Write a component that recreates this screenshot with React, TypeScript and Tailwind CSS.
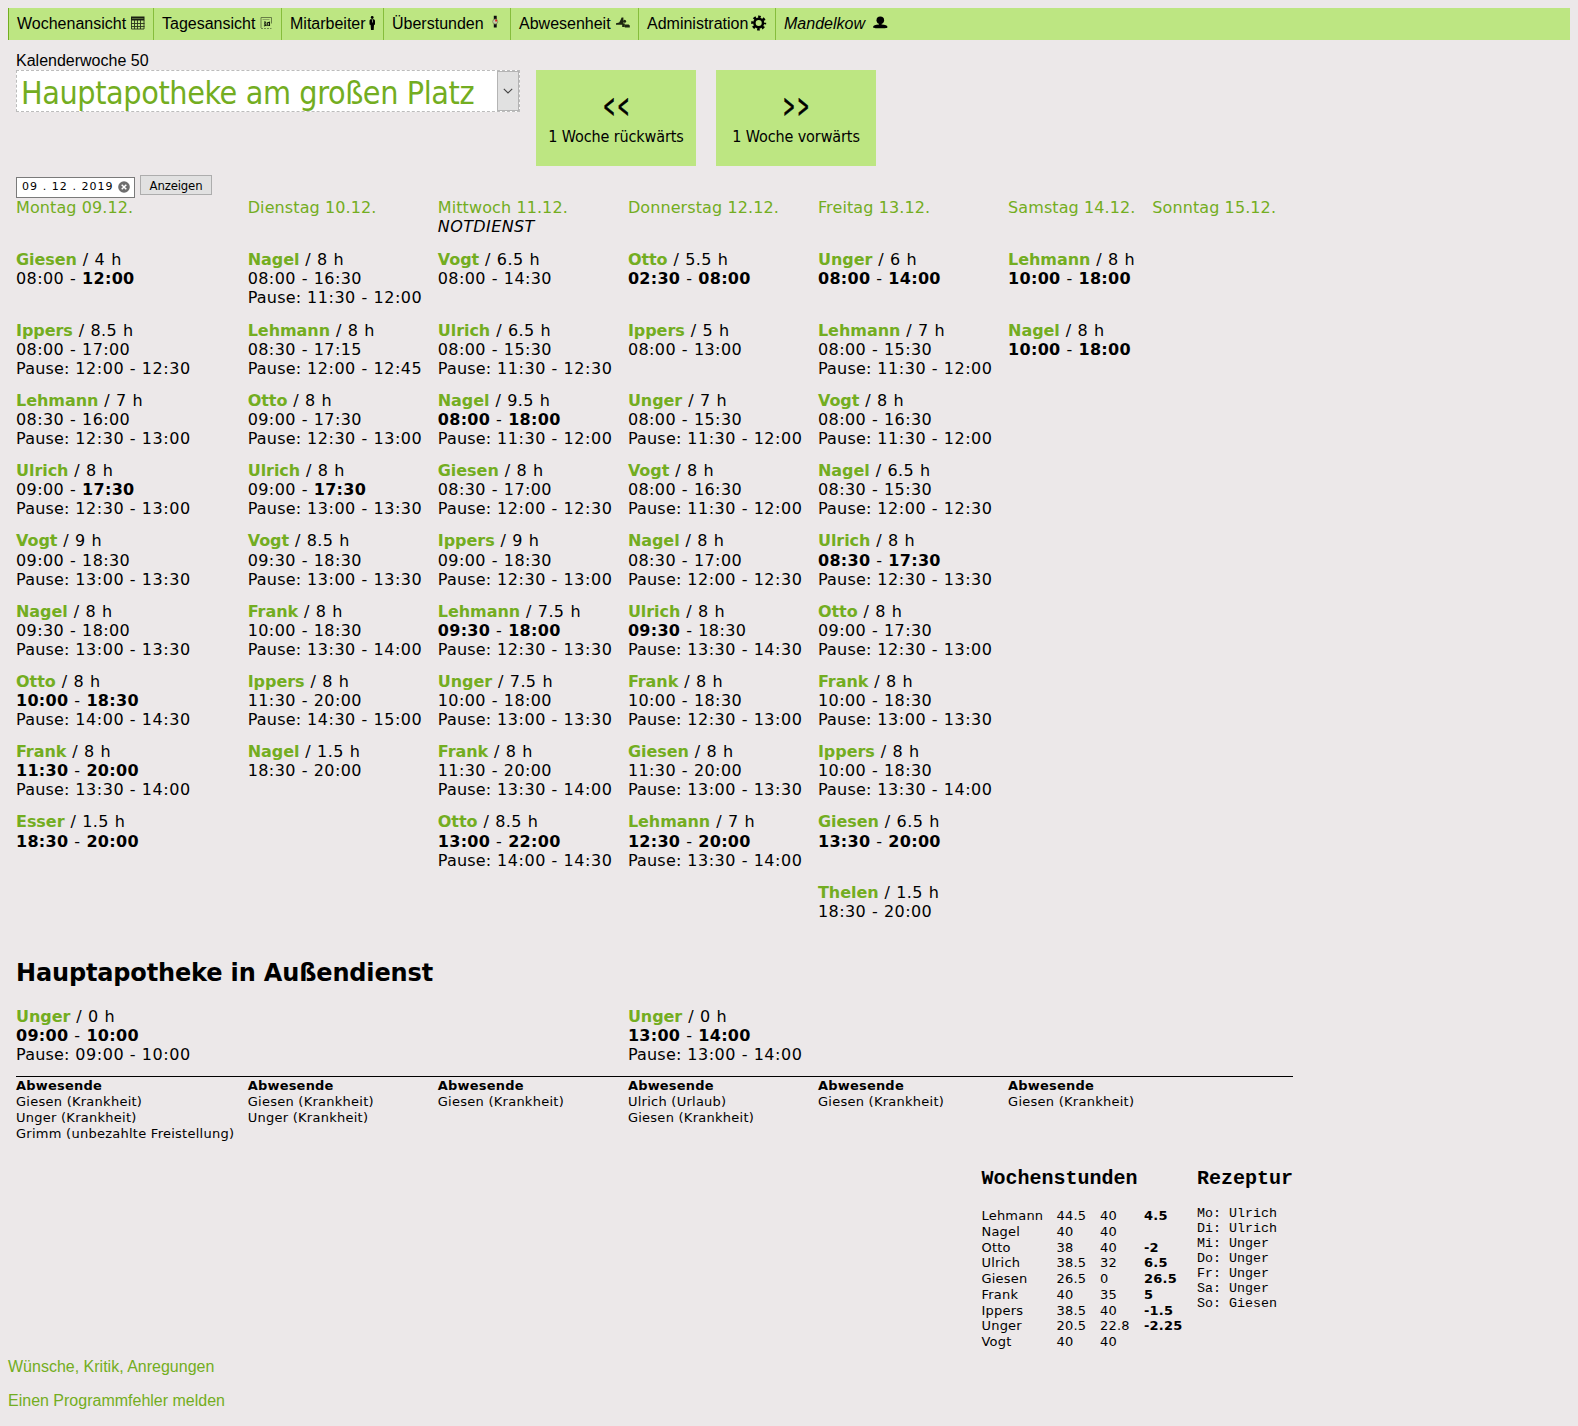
import React from "react";

type Shift = { name: string; hours: string; from: string; to: string; pause?: string };

/* Format: name|hours|from|to|pause; an asterisk marks an emphasised time. */
const parse = (s: string): Shift => {
  const [name, hours, from, to, pause] = s.split("|");
  return { name, hours, from, to, pause };
};

const days: { label: string; note?: string; shifts: string[]; outside?: string; absent: string[] }[] = [
  {
    label: "Montag 09.12.",
    shifts: [
      "Giesen|4|08:00|*12:00",
      "Ippers|8.5|08:00|17:00|12:00 - 12:30",
      "Lehmann|7|08:30|16:00|12:30 - 13:00",
      "Ulrich|8|09:00|*17:30|12:30 - 13:00",
      "Vogt|9|09:00|18:30|13:00 - 13:30",
      "Nagel|8|09:30|18:00|13:00 - 13:30",
      "Otto|8|*10:00|*18:30|14:00 - 14:30",
      "Frank|8|*11:30|*20:00|13:30 - 14:00",
      "Esser|1.5|*18:30|*20:00",
    ],
    outside: "Unger|0|*09:00|*10:00|09:00 - 10:00",
    absent: ["Giesen (Krankheit)", "Unger (Krankheit)", "Grimm (unbezahlte Freistellung)"],
  },
  {
    label: "Dienstag 10.12.",
    shifts: [
      "Nagel|8|08:00|16:30|11:30 - 12:00",
      "Lehmann|8|08:30|17:15|12:00 - 12:45",
      "Otto|8|09:00|17:30|12:30 - 13:00",
      "Ulrich|8|09:00|*17:30|13:00 - 13:30",
      "Vogt|8.5|09:30|18:30|13:00 - 13:30",
      "Frank|8|10:00|18:30|13:30 - 14:00",
      "Ippers|8|11:30|20:00|14:30 - 15:00",
      "Nagel|1.5|18:30|20:00",
    ],
    absent: ["Giesen (Krankheit)", "Unger (Krankheit)"],
  },
  {
    label: "Mittwoch 11.12.",
    note: "NOTDIENST",
    shifts: [
      "Vogt|6.5|08:00|14:30",
      "Ulrich|6.5|08:00|15:30|11:30 - 12:30",
      "Nagel|9.5|*08:00|*18:00|11:30 - 12:00",
      "Giesen|8|08:30|17:00|12:00 - 12:30",
      "Ippers|9|09:00|18:30|12:30 - 13:00",
      "Lehmann|7.5|*09:30|*18:00|12:30 - 13:30",
      "Unger|7.5|10:00|18:00|13:00 - 13:30",
      "Frank|8|11:30|20:00|13:30 - 14:00",
      "Otto|8.5|*13:00|*22:00|14:00 - 14:30",
    ],
    absent: ["Giesen (Krankheit)"],
  },
  {
    label: "Donnerstag 12.12.",
    shifts: [
      "Otto|5.5|*02:30|*08:00",
      "Ippers|5|08:00|13:00",
      "Unger|7|08:00|15:30|11:30 - 12:00",
      "Vogt|8|08:00|16:30|11:30 - 12:00",
      "Nagel|8|08:30|17:00|12:00 - 12:30",
      "Ulrich|8|*09:30|18:30|13:30 - 14:30",
      "Frank|8|10:00|18:30|12:30 - 13:00",
      "Giesen|8|11:30|20:00|13:00 - 13:30",
      "Lehmann|7|*12:30|*20:00|13:30 - 14:00",
    ],
    outside: "Unger|0|*13:00|*14:00|13:00 - 14:00",
    absent: ["Ulrich (Urlaub)", "Giesen (Krankheit)"],
  },
  {
    label: "Freitag 13.12.",
    shifts: [
      "Unger|6|*08:00|*14:00",
      "Lehmann|7|08:00|15:30|11:30 - 12:00",
      "Vogt|8|08:00|16:30|11:30 - 12:00",
      "Nagel|6.5|08:30|15:30|12:00 - 12:30",
      "Ulrich|8|*08:30|*17:30|12:30 - 13:30",
      "Otto|8|09:00|17:30|12:30 - 13:00",
      "Frank|8|10:00|18:30|13:00 - 13:30",
      "Ippers|8|10:00|18:30|13:30 - 14:00",
      "Giesen|6.5|*13:30|*20:00",
      "Thelen|1.5|18:30|20:00",
    ],
    absent: ["Giesen (Krankheit)"],
  },
  {
    label: "Samstag 14.12.",
    shifts: ["Lehmann|8|*10:00|*18:00", "Nagel|8|*10:00|*18:00"],
    absent: ["Giesen (Krankheit)"],
  },
  { label: "Sonntag 15.12.", shifts: [], absent: [] },
];

const hours = [
  ["Lehmann", "44.5", "40", "4.5"],
  ["Nagel", "40", "40", ""],
  ["Otto", "38", "40", "-2"],
  ["Ulrich", "38.5", "32", "6.5"],
  ["Giesen", "26.5", "0", "26.5"],
  ["Frank", "40", "35", "5"],
  ["Ippers", "38.5", "40", "-1.5"],
  ["Unger", "20.5", "22.8", "-2.25"],
  ["Vogt", "40", "40", ""],
];

const lab = [
  "Mo: Ulrich",
  "Di: Ulrich",
  "Mi: Unger",
  "Do: Unger",
  "Fr: Unger",
  "Sa: Unger",
  "So: Giesen",
];

const COLS = "grid grid-cols-[231.7px_190.1px_190.1px_190.1px_190.1px_144.2px_140.7px]";

function Time({ value }: { value: string }) {
  return value[0] === "*" ? (
    <b className="tracking-[0.3px]">{value.slice(1)}</b>
  ) : (
    <>{value}</>
  );
}

function ShiftCell({ data }: { data?: string }) {
  if (!data) return <div />;
  const s = parse(data);
  return (
    <div className="whitespace-nowrap">
      <div className="[word-spacing:0.45px]">
        <b className="text-[#73ad21] tracking-[-0.05px]">{s.name}</b> / {s.hours} h
      </div>
      <div className="[word-spacing:0.4px]">
        <Time value={s.from} /> - <Time value={s.to} />
      </div>
      {s.pause && (
        <div>
          <span className="tracking-[0.2px]">Pause:</span>
          <span className="tracking-[0.55px]"> {s.pause}</span>
        </div>
      )}
    </div>
  );
}

function WeekIcon() {
  return (
    <svg className="mb-[2px] ml-[5px]" width="14" height="14" viewBox="0 0 14 14">
      <rect x="0" y="0.5" width="13.5" height="4" fill="#1a1f12" />
      <path d="M1 2.500h11.500" stroke="#7d9a55" strokeWidth="0.6" />
      <path d="M0.500 4v9h12.500V4M0 7.500h13.500M0 10.500h13.500M3.500 4v9M6.500 4v9M9.500 4v9" fill="none" stroke="#2a331c" strokeWidth="0.9" />
    </svg>
  );
}

function DayIcon() {
  return (
    <svg className="mb-[2px] ml-[5px]" width="13" height="14" viewBox="0 0 13 14">
      <path d="M1 12V1.500h10.500v6" fill="none" stroke="#5d7340" strokeWidth="0.9" />
      <path d="M1 12.500h10.500" stroke="#5d7340" strokeWidth="0.8" strokeDasharray="2 1" />
      <path d="M2.500 3.500h7" stroke="#7e9a58" strokeWidth="0.8" />
      <path d="M4 6h1.800M5.600 6.500L4.600 8l1.200 1.200L4 10M9.500 10V8.500M7.200 9.200h2.300V6.200L7.200 7z" fill="none" stroke="#11160a" strokeWidth="1.1" />
    </svg>
  );
}

function PersonIcon() {
  return (
    <svg className="mb-[3px] ml-[3px]" width="7" height="14" viewBox="0 0 7 14">
      <circle cx="3.2" cy="1.5" r="1.4" />
      <path d="M1.4 3.200h3.600L6 4.400v4L5 9l-.3 5H2L1.600 9 .5 8.400v-4z" />
      <path d="M3.200 3.500h.8v3h-.8z" fill="#a5b98a" />
    </svg>
  );
}

function OvertimeIcon() {
  return (
    <svg className="mb-[4px] ml-[8px]" width="7" height="14" viewBox="0 0 7 14">
      <path d="M1.800 0.800h2.900V4.500H1.800zM1.800 8.800h2.900v3.700H1.800z" fill="#0c0c0c" />
      <circle cx="3.200" cy="6.600" r="2.500" fill="#c5cfae" stroke="#76834f" strokeWidth="0.8" />
      <path d="M3.200 4.600h1.800v2H3.200z" fill="#e21b1b" />
    </svg>
  );
}

function AbsenceIcon() {
  return (
    <svg className="mb-[2px] ml-[5px]" width="14" height="12" viewBox="0 0 14 12">
      <path d="M0 6.300l3.200-.9L4.800 2.500l.8-2h1.800v6h1.400V10H6.200V7.800H0z" fill="#1d2610" />
      <circle cx="8.600" cy="4.200" r="1.500" fill="#1d2610" />
      <path d="M8.800 7.600h3.800l1.200 1v1.900H8.800z" fill="#1d2610" />
    </svg>
  );
}

function GearIcon() {
  return (
    <svg className="mb-[3px] ml-[3px]" width="16" height="16" viewBox="0 0 16 16">
      <circle cx="7.700" cy="8" r="4.300" fill="none" stroke="#000" strokeWidth="2.500" />
      <circle cx="7.700" cy="8" r="6.200" fill="none" stroke="#000" strokeWidth="2.600" strokeDasharray="2.600 2.269" strokeDashoffset="1.300" />
    </svg>
  );
}

function UserIcon() {
  return (
    <svg className="mb-[4px] ml-[8px]" width="15" height="13" viewBox="0 0 15 13">
      <ellipse cx="7.300" cy="4.200" rx="3.800" ry="3.700" />
      <path d="M6 7h2.600v1.500c3.700.2 5.900 1.100 5.900 2.400 0 1-1.700 1.400-7.200 1.400S.1 11.900.1 10.900c0-1.300 2.200-2.200 5.900-2.400z" />
    </svg>
  );
}

function NavItem({ w, first, children }: { w: string; first?: boolean; children: React.ReactNode }) {
  return (
    <div className={`${w} flex h-8 items-center border-l ${first ? "border-[#73ad21]" : "border-[#86bd3c]"} pl-2 whitespace-nowrap`}>
      {children}
    </div>
  );
}

function WeekButton({ arrows, label, className }: { arrows: string; label: string; className: string }) {
  return (
    <div className={`${className} flex h-24 w-40 flex-col items-center bg-[#bde682] pt-[18px] font-['DejaVu_Sans_Condensed','DejaVu_Sans',sans-serif] [font-stretch:condensed]`}>
      <div className="scale-x-50 pl-[4px] text-[32px] leading-[36px] tracking-[4px] [-webkit-text-stroke:0.7px_black]">{arrows}</div>
      <div className="mt-[3px] text-[16px] leading-[20px] tracking-[-0.1px]">{label}</div>
    </div>
  );
}

export default function App() {
  return (
    <div className="h-[1426px] w-[1578px] overflow-hidden bg-[#ece8e9] pt-2 font-['Liberation_Sans',Arial,sans-serif] text-[16px] text-black">
      <nav className="mx-2 flex h-8 bg-[#bde682]">
        <NavItem w="w-[145px]" first>Wochenansicht<WeekIcon /></NavItem>
        <NavItem w="w-[128px]">Tagesansicht<DayIcon /></NavItem>
        <NavItem w="w-[102px]">Mitarbeiter<PersonIcon /></NavItem>
        <NavItem w="w-[127px]">Überstunden<OvertimeIcon /></NavItem>
        <NavItem w="w-[128px]">Abwesenheit<AbsenceIcon /></NavItem>
        <NavItem w="w-[137px]">Administration<GearIcon /></NavItem>
        <NavItem w="w-[120px]"><i>Mandelkow</i><UserIcon /></NavItem>
      </nav>

      <main className="px-4">
        <div className="mt-[11px] h-[19px] leading-[19px]">Kalenderwoche 50</div>
        <div className="flex items-start">
          <div className="flex h-[42px] w-[504px] items-stretch justify-between border border-dashed border-[#bcbcbc] bg-white">
            <span className="pt-px pl-[4px] font-['DejaVu_Sans_Condensed','DejaVu_Sans',sans-serif] [font-stretch:condensed] text-[32px] leading-[43px] tracking-[-0.4px] whitespace-nowrap text-[#73ad21]">
              Hauptapotheke am großen Platz
            </span>
            <span className="flex w-[22px] items-center justify-center border border-[#b4b4b4] bg-[#e1e1e1]">
              <svg width="10" height="6" viewBox="0 0 10 6"><path d="M0.800 0.800L5 5l4.200-4.200" fill="none" stroke="#444" strokeWidth="1.100" /></svg>
            </span>
          </div>
          <WeekButton className="ml-4" arrows="<<" label="1 Woche rückwärts" />
          <WeekButton className="ml-5" arrows=">>" label="1 Woche vorwärts" />
        </div>

        <div className="mt-[9px] flex h-[23px] items-start">
          <div className="mt-[2px] flex h-[21px] w-[119px] items-center border border-[#7a7a7a] bg-white pl-[5px] font-['DejaVu_Sans',sans-serif] text-[11px] whitespace-nowrap">
            <span className="w-[96px] tracking-[1.05px]">09 . 12 . 2019</span>
            <svg className="mb-px" width="12" height="12" viewBox="0 0 12 12"><circle cx="6" cy="6" r="5.800" fill="#6d6d6d" /><path d="M3.700 3.700l4.600 4.600M8.300 3.700L3.700 8.300" stroke="#fff" strokeWidth="1.500" /></svg>
          </div>
          <button className="ml-[5px] h-[20px] w-[72px] border border-[#adadad] bg-[#e1e1e1] pt-px font-['DejaVu_Sans_Condensed','DejaVu_Sans',sans-serif] [font-stretch:condensed] text-[13px] leading-[18px] tracking-[-0.15px]">Anzeigen</button>
        </div>

        <section className="w-[1277px] font-['DejaVu_Sans',Verdana,sans-serif] text-[16px] leading-[19.2px] tracking-[0.4px]">
          <div className={`${COLS} h-[51.7px]`}>
            {days.map((d) => (
              <div key={d.label} className="whitespace-nowrap">
                <div className="tracking-[0.1px] text-[#73ad21]">{d.label}</div>
                {d.note && <i>{d.note}</i>}
              </div>
            ))}
          </div>
          {Array.from({ length: 10 }, (_, r) => (
            <div key={r} className={`${COLS} ${r === 0 ? "h-[70.9px]" : "h-[70.25px]"}`}>
              {days.map((d) => <ShiftCell key={d.label} data={d.shifts[r]} />)}
            </div>
          ))}
          <h2 className="mt-[6.4px] h-[47.4px] text-[24px] leading-[29px] font-bold tracking-[-0.15px]">Hauptapotheke in Außendienst</h2>
          <div className={`${COLS} h-[69.6px]`}>
            {days.map((d) => <ShiftCell key={d.label} data={d.outside} />)}
          </div>
          <div className={`${COLS} h-[83px] border-t border-black pt-px text-[13px] leading-[16px] tracking-[0.260px]`}>
            {days.map((d) => (
              <div key={d.label} className="whitespace-nowrap">
                {d.absent.length > 0 && <b className="tracking-[0.2px]">Abwesende</b>}
                {d.absent.map((a) => <div key={a}>{a}</div>)}
              </div>
            ))}
          </div>
          <div className="flex h-[196px] justify-end">
            <div className="w-[215.5px]">
              <h3 className="h-[49px] font-['Liberation_Mono',monospace] text-[20px] leading-[40px] font-bold tracking-normal">Wochenstunden</h3>
              <div className="text-[13px] leading-[15.750px] tracking-[0.2px]">
                {hours.map(([n, a, b, c]) => (
                  <div key={n} className="grid grid-cols-[75px_43.500px_44px_52px]">
                    <span>{n}</span><span>{a}</span><span>{b}</span><b>{c}</b>
                  </div>
                ))}
              </div>
            </div>
            <div className="w-[96px] font-['Liberation_Mono',monospace] tracking-normal">
              <h3 className="h-[47px] text-[20px] leading-[40px] font-bold">Rezeptur</h3>
              <div className="text-[13.330px] leading-[15px]">
                {lab.map((l) => <div key={l}>{l}</div>)}
              </div>
            </div>
          </div>
        </section>
      </main>

      <footer className="px-2 text-[#73ad21]">
        <div className="h-[34px]">Wünsche, Kritik, Anregungen</div>
        <div>Einen Programmfehler melden</div>
      </footer>
    </div>
  );
}
